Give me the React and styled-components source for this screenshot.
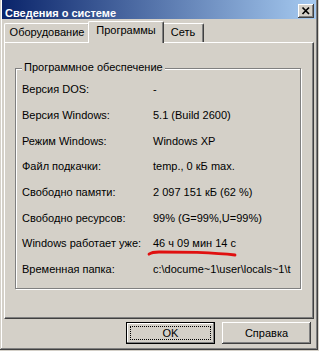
import React from "react";
import styled, { createGlobalStyle } from "styled-components";

const FACE = "#D4D0C8";
const SHADOW = "#808080";
const DARK = "#404040";

const GlobalStyle = createGlobalStyle`
  html, body { margin: 0; padding: 0; background: ${FACE}; }
  body {
    font-family: "Liberation Sans", Arial, sans-serif;
    font-size: 11px;
    color: #000;
  }
  * { box-sizing: border-box; }
`;

const Window = styled.div`
  width: 318px;
  height: 350px;
  background: ${FACE};
  padding: 0 2px 2px 2px;
  display: flex;
  flex-direction: column;
  box-shadow: inset -1px -1px 0 ${DARK}, inset 1px 0 0 ${FACE},
    inset -2px -2px 0 ${SHADOW}, inset 2px 0 0 #fff;
`;

const TitleBar = styled.div`
  flex: none;
  height: 19px;
  display: flex;
  align-items: flex-start;
  justify-content: space-between;
  padding: 0 2px 0 3px;
  background: linear-gradient(to right, #0a246a, #a6caf0);
  overflow: hidden;
`;

const TitleText = styled.span`
  margin-top: 5px;
  line-height: 16px;
  font-weight: bold;
  color: #fff;
  white-space: nowrap;
`;

const CloseButton = styled.button`
  margin-top: 4px;
  width: 16px;
  height: 14px;
  padding: 0;
  border: none;
  background: ${FACE};
  display: flex;
  align-items: center;
  justify-content: center;
  box-shadow: inset -1px -1px 0 ${DARK}, inset 1px 1px 0 #fff,
    inset -2px -2px 0 ${SHADOW}, inset 2px 2px 0 ${FACE};
`;

const Body = styled.div`
  flex: 1;
  display: flex;
  flex-direction: column;
  padding: 2px 2px 0 2px;
`;

const TabStrip = styled.div`
  height: 21px;
  display: flex;
  align-items: flex-end;
`;

const Tab = styled.div`
  position: relative;
  z-index: ${(p) => (p.$active ? 1 : 0)};
  width: ${(p) => p.$w}px;
  height: ${(p) => (p.$active ? 22 : 19)}px;
  margin-left: ${(p) => p.$ml || 0}px;
  margin-bottom: ${(p) => (p.$active ? -1 : 0)}px;
  padding-bottom: ${(p) => (p.$active ? 3 : 0)}px;
  background: ${FACE};
  border-top: 1px solid #fff;
  border-left: 1px solid #fff;
  border-right: 1px solid ${DARK};
  border-radius: 2px 2px 0 0;
  box-shadow: inset -1px 0 0 ${SHADOW};
  display: flex;
  justify-content: center;
  line-height: 17px;
  white-space: nowrap;
`;

const Panel = styled.div`
  height: 277px;
  border-top: 1px solid #fff;
  border-left: 1px solid #fff;
  border-right: 1px solid ${DARK};
  border-bottom: 1px solid ${DARK};
  box-shadow: inset -1px -1px 0 ${SHADOW};
  padding: 25px 0 0 10px;
`;

const Group = styled.div`
  position: relative;
  width: 286px;
  height: 221px;
  border: 1px solid ${SHADOW};
  box-shadow: 1px 1px 0 #fff, inset 1px 1px 0 #fff;
  padding: 8px 2px 0 6px;
`;

const Legend = styled.span`
  position: absolute;
  top: -8px;
  left: 6px;
  padding: 0 2px;
  line-height: 13px;
  background: ${FACE};
  white-space: nowrap;
`;

const InfoGrid = styled.div`
  display: grid;
  grid-template-columns: 131px 1fr;
  grid-auto-rows: 25.7px;
  align-items: center;
`;

const Label = styled.span`
  line-height: 13px;
  white-space: nowrap;
`;

const Value = styled.span`
  position: relative;
  line-height: 13px;
  white-space: nowrap;
`;

const Mark = styled.svg`
  position: absolute;
  left: -6px;
  top: 13px;
  width: 90px;
  height: 7px;
  overflow: visible;
`;

const ButtonRow = styled.div`
  display: flex;
  justify-content: flex-end;
  gap: 7px;
  padding: 3px 3px 0 0;
`;

const Button = styled.button`
  width: 89px;
  height: 22px;
  padding: 4px;
  border: none;
  background: ${FACE};
  font: inherit;
  color: #000;
  display: flex;
  align-items: stretch;
  box-shadow: ${(p) =>
    p.$default
      ? `inset 0 0 0 1px #000, inset -2px -2px 0 ${SHADOW}, inset 2px 2px 0 #fff`
      : `inset -1px -1px 0 ${DARK}, inset 1px 1px 0 #fff, inset -2px -2px 0 ${SHADOW}, inset 2px 2px 0 ${FACE}`};
`;

const ButtonLabel = styled.span`
  flex: 1;
  display: flex;
  align-items: center;
  justify-content: center;
  border: 1px dotted ${(p) => (p.$focus ? "#000" : "transparent")};
  line-height: 12px;
`;

const rows = [
  ["Версия DOS:", "-"],
  ["Версия Windows:", "5.1 (Build 2600)"],
  ["Режим Windows:", "Windows XP"],
  ["Файл подкачки:", "temp., 0 кБ max."],
  ["Свободно памяти:", "2 097 151 кБ (62 %)"],
  ["Свободно ресурсов:", "99% (G=99%,U=99%)"],
  ["Windows работает уже:", "46 ч 09 мин 14 с", true],
  ["Временная папка:", "c:\\docume~1\\user\\locals~1\\t"],
];

export default function App() {
  return (
    <>
      <GlobalStyle />
      <Window>
        <TitleBar>
          <TitleText>Сведения о системе</TitleText>
          <CloseButton aria-label="Закрыть">
            <svg width="16" height="14" viewBox="0 0 16 14">
              <path
                d="M4.5 3.5 L11 10 M11 3.5 L4.5 10"
                stroke="#000"
                strokeWidth="1.7"
                fill="none"
              />
            </svg>
          </CloseButton>
        </TitleBar>
        <Body>
          <TabStrip>
            <Tab $w={86}>Оборудование</Tab>
            <Tab $w={76} $ml={-2} $active>
              Программы
            </Tab>
            <Tab $w={42} $ml={-2}>
              Сеть
            </Tab>
          </TabStrip>
          <Panel>
            <Group>
              <Legend>Программное обеспечение</Legend>
              <InfoGrid>
                {rows.map(([label, value, marked]) => (
                  <React.Fragment key={label}>
                    <Label>{label}</Label>
                    <Value>
                      {value}
                      {marked && (
                        <Mark viewBox="0 0 90 7">
                          <path
                            d="M2 4.2 Q5 2 12 2 L50 2.4 Q74 3.4 88 5"
                            stroke="#e01010"
                            strokeWidth="2.8"
                            strokeLinecap="round"
                            fill="none"
                          />
                        </Mark>
                      )}
                    </Value>
                  </React.Fragment>
                ))}
              </InfoGrid>
            </Group>
          </Panel>
          <ButtonRow>
            <Button $default>
              <ButtonLabel $focus>OK</ButtonLabel>
            </Button>
            <Button>
              <ButtonLabel>Справка</ButtonLabel>
            </Button>
          </ButtonRow>
        </Body>
      </Window>
    </>
  );
}
